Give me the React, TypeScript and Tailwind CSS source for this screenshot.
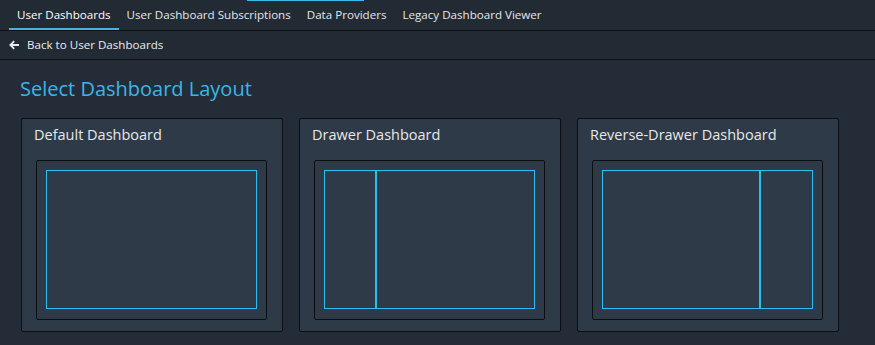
import React from 'react';

type Layout = 'default' | 'drawer' | 'reverse';

const TABS = [
  'User Dashboards',
  'User Dashboard Subscriptions',
  'Data Providers',
  'Legacy Dashboard Viewer',
];

const LAYOUTS: { title: string; kind: Layout }[] = [
  { title: 'Default Dashboard', kind: 'default' },
  { title: 'Drawer Dashboard', kind: 'drawer' },
  { title: 'Reverse-Drawer Dashboard', kind: 'reverse' },
];

// mini preview of the layout (blue wireframe)
const Preview: React.FC<{ kind: Layout }> = ({ kind }) => (
  <div className="rounded-[2px] border border-[#0b0f14] pt-[9px] pr-[9px] pb-[10px] pl-[9px]">
    <div className="flex h-[139px] w-[211px] border border-[#2ebdf0]">
      {kind === 'drawer' && (
        <>
          <div className="w-[50px]" />
          <div className="w-[2px] bg-[#2ebdf0]" />
          <div className="flex-1" />
        </>
      )}
      {kind === 'reverse' && (
        <>
          <div className="flex-1" />
          <div className="w-[2px] bg-[#2ebdf0]" />
          <div className="w-[51px]" />
        </>
      )}
    </div>
  </div>
);

const LayoutCard: React.FC<{ title: string; kind: Layout }> = ({ title, kind }) => (
  <div className="w-[262px] rounded-[2px] border border-[#0b0f14] bg-[#2e3a48] pt-[6px] pr-[15px] pb-[11px] pl-[12px]">
    <div className="text-[14.5px] leading-[20px] text-[#e6e8ea]">{title}</div>
    <div className="mt-[15px] ml-[2px]">
      <Preview kind={kind} />
    </div>
  </div>
);

const App: React.FC = () => {
  return (
    <div
      className="h-[345px] w-[875px] overflow-hidden bg-[#242c37] text-[#e9ecef]"
      style={{ fontFamily: '"Open Sans", "Liberation Sans", sans-serif' }}
    >
      {/* Tabs */}
      <div className="relative h-[31px] border-b border-[#0e1217] bg-[#222a33]">
        <div className="absolute top-0 left-[247px] h-px w-[117px] bg-[#3cb8ea]" />
        <nav className="flex h-full pl-[9px]">
          {TABS.map((t, i) => (
            <div
              key={t}
              className={[
                'flex items-center border-b-2 px-2 pt-[1px] text-[11.6px]',
                i === 0 ? 'border-[#49b3e0] text-white' : 'border-transparent text-[#e4e7ea]',
              ].join(' ')}
            >
              {t}
            </div>
          ))}
        </nav>
      </div>

      {/* Back link */}
      <div className="flex h-[29px] items-center border-b border-[#0e1217] bg-[#222a33] pl-[9px] text-[11.6px]">
        <svg width="11" height="10" viewBox="0 0 11 10" className="mr-[7px]">
          <path d="M10 5H1.8M5.2 1.2 1.4 5 5.2 8.8" fill="none" stroke="#e9ecef" strokeWidth="1.8" />
        </svg>
        <span>Back to User Dashboards</span>
      </div>

      {/* Content */}
      <main className="pt-[16px] pl-[21px]">
        <h1 className="-ml-px text-[20px] leading-[26px] text-[#3ab6e8]">Select Dashboard Layout</h1>
        <div className="mt-[16px] flex gap-[16px]">
          {LAYOUTS.map((l) => (
            <LayoutCard key={l.kind} title={l.title} kind={l.kind} />
          ))}
        </div>
      </main>
    </div>
  );
};

export default App;
